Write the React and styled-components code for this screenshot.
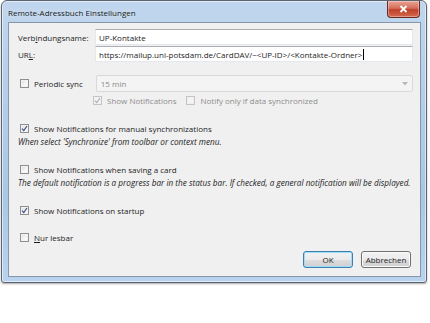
import React from 'react';
import styled, { createGlobalStyle } from 'styled-components';

const GlobalStyle = createGlobalStyle`
  html, body {
    margin: 0;
    padding: 0;
    background: #fff;
  }
  body {
    font-family: "Open Sans", "Noto Sans", sans-serif;
    font-size: 8px;
    color: #1e1e1e;
  }
`;

function CheckBox({ checked, disabled }) {
  return (
    <Box $disabled={disabled}>
      {checked && (
        <svg width="7" height="7" viewBox="0 0 7 7">
          <path
            d="M1 3.6 L2.8 5.6 L6 1"
            fill="none"
            stroke={disabled ? '#a9b0bd' : '#3d4f86'}
            strokeWidth="1.2"
          />
        </svg>
      )}
    </Box>
  );
}

function App() {
  return (
    <>
      <GlobalStyle />
      <Page>
        <Window>
          <TitleBar>
            <Title>Remote-Adressbuch Einstellungen</Title>
            <CloseButton>
              <svg width="9" height="8" viewBox="0 0 9 8">
                <path d="M1.5 1 L7.5 7 M7.5 1 L1.5 7" stroke="#fff" strokeWidth="1.8" />
              </svg>
            </CloseButton>
          </TitleBar>
          <Client>
            <FieldRow>
              <Label>
                Verb<u>i</u>ndungsname:
              </Label>
              <TextInput>UP-Kontakte</TextInput>
            </FieldRow>
            <FieldRow>
              <Label>
                UR<u>L</u>:
              </Label>
              <TextInput>
                https://mailup.uni-potsdam.de/CardDAV/~&lt;UP-ID&gt;/&lt;Kontakte-Ordner&gt;
                <Caret />
              </TextInput>
            </FieldRow>

            <SyncRow>
              <CheckLabel>
                <CheckBox />
                <span>Periodic sync</span>
              </CheckLabel>
              <Select>
                <span>15 min</span>
                <svg width="6" height="4" viewBox="0 0 6 4">
                  <path d="M0 0 H6 L3 3.5 Z" fill="#b7b7b7" />
                </svg>
              </Select>
            </SyncRow>
            <SubRow>
              <CheckLabel $disabled>
                <CheckBox checked disabled />
                <span>Show Notifications</span>
              </CheckLabel>
              <CheckLabel $disabled>
                <CheckBox disabled />
                <span>Notify only if data synchronized</span>
              </CheckLabel>
            </SubRow>

            <Option $top={17}>
              <CheckLabel>
                <CheckBox checked />
                <span>Show Notifications for manual synchronizations</span>
              </CheckLabel>
              <Hint>When select 'Synchronize' from toolbar or context menu.</Hint>
            </Option>

            <Option $top={17}>
              <CheckLabel>
                <CheckBox />
                <span>Show Notifications when saving a card</span>
              </CheckLabel>
              <Hint>
                The default notification is a progress bar in the status bar. If checked, a
                general notification will be displayed.
              </Hint>
            </Option>

            <Option $top={17}>
              <CheckLabel>
                <CheckBox checked />
                <span>Show Notifications on startup</span>
              </CheckLabel>
            </Option>

            <Option $top={16}>
              <CheckLabel>
                <CheckBox />
                <span>
                  <u>N</u>ur lesbar
                </span>
              </CheckLabel>
            </Option>

            <ButtonBar>
              <Button $default>OK</Button>
              <Button>Abbrechen</Button>
            </ButtonBar>
          </Client>
        </Window>
      </Page>
    </>
  );
}

const Page = styled.div`
  width: 430px;
  height: 323px;
  padding: 0 0 0 1px;
  box-sizing: border-box;
`;

const Window = styled.div`
  width: 426px;
  height: 283px;
  box-sizing: border-box;
  display: flex;
  flex-direction: column;
  border: 1px solid #5b6470;
  border-radius: 6px 6px 3px 3px;
  background: linear-gradient(180deg, #c0d6ee 0%, #b5cfea 30%, #a9c7e6 70%, #b9d3ef 100%);
  box-shadow: inset 0 0 0 1px rgba(255, 255, 255, 0.55), 0 1px 2px rgba(0, 0, 0, 0.35);
`;

const TitleBar = styled.div`
  height: 21px;
  display: flex;
  align-items: flex-start;
  padding: 0 4px 0 6px;
`;

const Title = styled.div`
  margin-top: 6px;
  font-size: 8px;
  color: #1a1a1a;
  text-shadow: 0 0 6px rgba(255, 255, 255, 0.9);
`;

const CloseButton = styled.div`
  margin-left: auto;
  margin-right: 2px;
  width: 31px;
  height: 16px;
  display: flex;
  align-items: center;
  justify-content: center;
  border: 1px solid #6b2a22;
  border-top: none;
  border-radius: 0 0 4px 4px;
  background: linear-gradient(180deg, #e8a493 0%, #d46f5b 45%, #c0402b 55%, #d4684e 100%);
  box-shadow: inset 0 0 0 1px rgba(255, 255, 255, 0.35);
`;

const Client = styled.div`
  flex: 1;
  margin: 0 5px 5px 6px;
  padding: 6px 7px 0 9px;
  background: #f0f0f0;
  border: 1px solid #8796a8;
  display: flex;
  flex-direction: column;
`;

const FieldRow = styled.div`
  display: flex;
  align-items: center;
  height: 16px;
  margin-bottom: 1px;
`;

const Label = styled.div`
  width: 77px;
  flex-shrink: 0;
`;

const TextInput = styled.div`
  flex: 1;
  height: 16px;
  box-sizing: border-box;
  display: flex;
  align-items: center;
  padding: 0 3px;
  background: #fff;
  border: 1px solid #e3e9ef;
  border-top-color: #abadb3;
  white-space: nowrap;
  overflow: hidden;
`;

const Caret = styled.span`
  display: inline-block;
  width: 1px;
  height: 11px;
  background: #000;
  margin-left: 1px;
`;

const SyncRow = styled.div`
  display: flex;
  align-items: center;
  margin-top: 12px;
  height: 17px;
`;

const Select = styled.div`
  flex: 1;
  margin-left: 13px;
  height: 17px;
  box-sizing: border-box;
  display: flex;
  align-items: center;
  justify-content: space-between;
  padding: 0 4px 0 4px;
  background: #f4f4f4;
  border: 1px solid #d9d9d9;
  border-radius: 2px;
  color: #8a8a8a;
`;

const SubRow = styled.div`
  display: flex;
  gap: 8px;
  margin: 2px 0 0 73px;
  height: 12px;
  align-items: center;
`;

const CheckLabel = styled.label`
  display: flex;
  align-items: center;
  gap: 5px;
  flex-shrink: 0;
  white-space: nowrap;
  color: ${(p) => (p.$disabled ? '#8d8d8d' : '#1e1e1e')};
  margin-left: 2px;
`;

const Box = styled.span`
  width: 9px;
  height: 9px;
  box-sizing: border-box;
  display: inline-flex;
  align-items: center;
  justify-content: center;
  border: 1px solid ${(p) => (p.$disabled ? '#c5c5c5' : '#8e8f8f')};
  background: ${(p) =>
    p.$disabled
      ? '#f4f4f4'
      : 'linear-gradient(135deg, #dcdcdc 0%, #f6f6f6 60%, #ffffff 100%)'};
  box-shadow: inset 0 0 0 1px ${(p) => (p.$disabled ? '#f0f0f0' : '#f3f3f3')};
`;

const Option = styled.div`
  display: flex;
  flex-direction: column;
  gap: 2px;
  margin-top: ${(p) => p.$top}px;
`;

const Hint = styled.div`
  font-style: italic;
  font-size: 8.2px;
  white-space: nowrap;
  color: #1e1e1e;
`;

const ButtonBar = styled.div`
  display: flex;
  justify-content: flex-end;
  gap: 8px;
  margin-top: auto;
  margin-bottom: 8px;
  padding-right: 2px;
`;

const Button = styled.div`
  width: 50px;
  height: 17px;
  box-sizing: border-box;
  display: flex;
  align-items: center;
  justify-content: center;
  border: 1px solid ${(p) => (p.$default ? '#3c7fb1' : '#707070')};
  border-radius: 3px;
  background: linear-gradient(180deg, #f2f2f2 0%, #ebebeb 50%, #dddddd 51%, #cfcfcf 100%);
  box-shadow: inset 0 0 0 1px ${(p) => (p.$default ? '#9fdcf5' : '#fcfcfc')};
`;

export default App;
